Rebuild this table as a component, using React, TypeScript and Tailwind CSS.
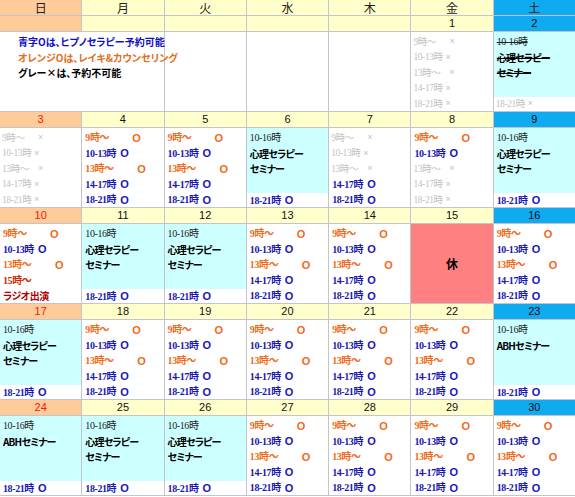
import React from 'react';

type Tone = 'orange' | 'blue';
type Slot = { label: string; tone: Tone; w: string; gw: string };

const SLOTS: Slot[] = [
  { label: '9時～', tone: 'orange', w: 'w-[47px]', gw: 'w-[36px]' },
  { label: '10-13時', tone: 'blue', w: 'w-[35px]', gw: 'w-[32px]' },
  { label: '13時～', tone: 'orange', w: 'w-[52px]', gw: 'w-[36px]' },
  { label: '14-17時', tone: 'blue', w: 'w-[35px]', gw: 'w-[32px]' },
  { label: '18-21時', tone: 'blue', w: 'w-[35px]', gw: 'w-[32px]' },
];

const TONE: Record<Tone, string> = {
  orange: 'text-[#f06a18]',
  blue: 'text-[#1818b0]',
};

type Cell =
  | { kind: 'legend' }
  | { kind: 'empty' }
  | { kind: 'slots'; open: boolean[] }
  | { kind: 'sem'; title: string[]; strike?: boolean }
  | { kind: 'off' }
  | { kind: 'radio' };

const ALL: Cell = { kind: 'slots', open: [true, true, true, true, true] };
const NONE: Cell = { kind: 'slots', open: [false, false, false, false, false] };
const SEM: Cell = { kind: 'sem', title: ['心理セラピー', 'セミナー'] };
const ABH: Cell = { kind: 'sem', title: ['ABHセミナー'] };

const WEEKS: { dates: string[]; cells: Cell[] }[] = [
  {
    dates: ['', '', '', '', '', '1', '2'],
    cells: [{ kind: 'legend' }, { kind: 'empty' }, { kind: 'empty' }, { kind: 'empty' }, NONE, { kind: 'sem', title: ['心理セラピー', 'セミナー'], strike: true }],
  },
  {
    dates: ['3', '4', '5', '6', '7', '8', '9'],
    cells: [NONE, ALL, ALL, SEM, { kind: 'slots', open: [false, false, false, true, true] }, { kind: 'slots', open: [true, true, false, false, false] }, SEM],
  },
  { dates: ['10', '11', '12', '13', '14', '15', '16'], cells: [{ kind: 'radio' }, SEM, SEM, ALL, ALL, { kind: 'off' }, ALL] },
  { dates: ['17', '18', '19', '20', '21', '22', '23'], cells: [SEM, ALL, ALL, ALL, ALL, ALL, ABH] },
  { dates: ['24', '25', '26', '27', '28', '29', '30'], cells: [ABH, SEM, SEM, ALL, ALL, ALL, ALL] },
];

const DAYS = ['日', '月', '火', '水', '木', '金', '土'];

const SERIF = "font-['Liberation_Serif','Noto_Sans_CJK_JP',serif] tracking-[-0.4px]";
const GOTHIC = "font-['Noto_Sans_CJK_JP','Liberation_Sans',sans-serif] [font-feature-settings:'palt']";

function headBg(i: number) {
  if (i === 0) return 'bg-[#ffcc99]';
  if (i === 6) return 'bg-[#10aaf0]';
  return 'bg-[#ffffcc]';
}

function Mark({ tone }: { tone: Tone }) {
  return <span className={`font-['Liberation_Sans',sans-serif] text-[11px] font-bold tracking-normal ${TONE[tone]}`}>O</span>;
}

function OpenLine({ slot }: { slot: Slot }) {
  return (
    <div className={`flex h-[15.5px] items-center whitespace-nowrap pl-[3px] text-[10px] font-bold ${SERIF}`}>
      <span className={`shrink-0 ${slot.w} ${TONE[slot.tone]}`}>{slot.label}</span>
      <Mark tone={slot.tone} />
    </div>
  );
}

function ClosedLine({ slot }: { slot: Slot }) {
  return (
    <div className={`flex h-[15.5px] items-center whitespace-nowrap pl-[2px] text-[9.5px] text-[#c2c2c2] ${SERIF}`}>
      <span className={`shrink-0 ${slot.gw}`}>{slot.label}</span>
      <span className="font-['Liberation_Sans',sans-serif] text-[9px]">×</span>
    </div>
  );
}

function Content({ cell }: { cell: Cell }) {
  if (cell.kind === 'legend') {
    return (
      <div className={`relative z-10 col-span-2 h-[79px] bg-white pl-[18px] pt-[2px] text-[10px] font-bold ${GOTHIC}`}>
        <div className="flex h-[15.5px] items-center whitespace-nowrap text-[#1010c8]">青字Oは、ヒプノセラピー予約可能</div>
        <div className="flex h-[15.5px] items-center whitespace-nowrap text-[#e07020]">オレンジOは、レイキ&amp;カウンセリング</div>
        <div className="flex h-[15.5px] items-center whitespace-nowrap text-black">グレー×は、予約不可能</div>
      </div>
    );
  }
  if (cell.kind === 'empty') return <div className="h-[79px] bg-white" />;
  if (cell.kind === 'off') {
    return (
      <div className={`flex h-[79px] items-center justify-center bg-[#ff8080] text-[12px] font-bold text-black ${GOTHIC}`}>休</div>
    );
  }
  if (cell.kind === 'radio') {
    return (
      <div className="h-[79px] bg-white pt-[2px]">
        <OpenLine slot={SLOTS[0]} />
        <OpenLine slot={SLOTS[1]} />
        <OpenLine slot={SLOTS[2]} />
        <div className={`flex h-[15.5px] items-center pl-[3px] text-[10px] font-bold text-[#cc2a00] ${SERIF}`}>15時～</div>
        <div className={`flex h-[15.5px] items-center whitespace-nowrap pl-[3px] text-[10px] font-bold tracking-[-0.5px] text-[#b00000] ${GOTHIC}`}>ラジオ出演</div>
      </div>
    );
  }
  if (cell.kind === 'sem') {
    const strike = cell.strike ? 'line-through' : '';
    return (
      <div className="flex h-[79px] flex-col bg-white">
        <div className="h-[65px] bg-[#ccffff] pl-[3px] pt-[2px] text-black">
          <div className={`flex h-[15.5px] items-center text-[10px] text-[#222] ${SERIF}`}>
            <span className={strike}>10-16時</span>
          </div>
          {cell.title.map((t) => (
            <div key={t} className={`flex h-[15.5px] items-center whitespace-nowrap text-[10px] font-bold tracking-[-0.8px] ${GOTHIC}`}>
              <span className={strike}>{t}</span>
            </div>
          ))}
        </div>
        <div className="flex h-[14px] flex-col justify-center">
          {cell.strike ? <ClosedLine slot={SLOTS[4]} /> : <OpenLine slot={SLOTS[4]} />}
        </div>
      </div>
    );
  }
  return (
    <div className="h-[79px] bg-white pt-[2px]">
      {SLOTS.map((s, i) => (cell.open[i] ? <OpenLine key={s.label} slot={s} /> : <ClosedLine key={s.label} slot={s} />))}
    </div>
  );
}

export default function App() {
  return (
    <div className="grid w-[575px] grid-cols-7 gap-px bg-[#c4c4cc] pb-px">
      {DAYS.map((d, i) => (
        <div key={d} className={`flex h-[15px] items-center justify-center text-[12px] text-[#222] ${GOTHIC} ${headBg(i)}`}>
          {d}
        </div>
      ))}
      {WEEKS.map((w, wi) => (
        <React.Fragment key={wi}>
          {w.dates.map((d, i) => (
            <div
              key={`d${i}`}
              className={`flex h-[15px] items-center justify-center font-['Liberation_Sans',sans-serif] text-[11px] ${headBg(i)} ${i === 0 ? 'text-[#ee2200]' : 'text-[#111]'}`}
            >
              {d}
            </div>
          ))}
          {w.cells.map((c, i) => (
            <Content key={`c${i}`} cell={c} />
          ))}
        </React.Fragment>
      ))}
    </div>
  );
}
